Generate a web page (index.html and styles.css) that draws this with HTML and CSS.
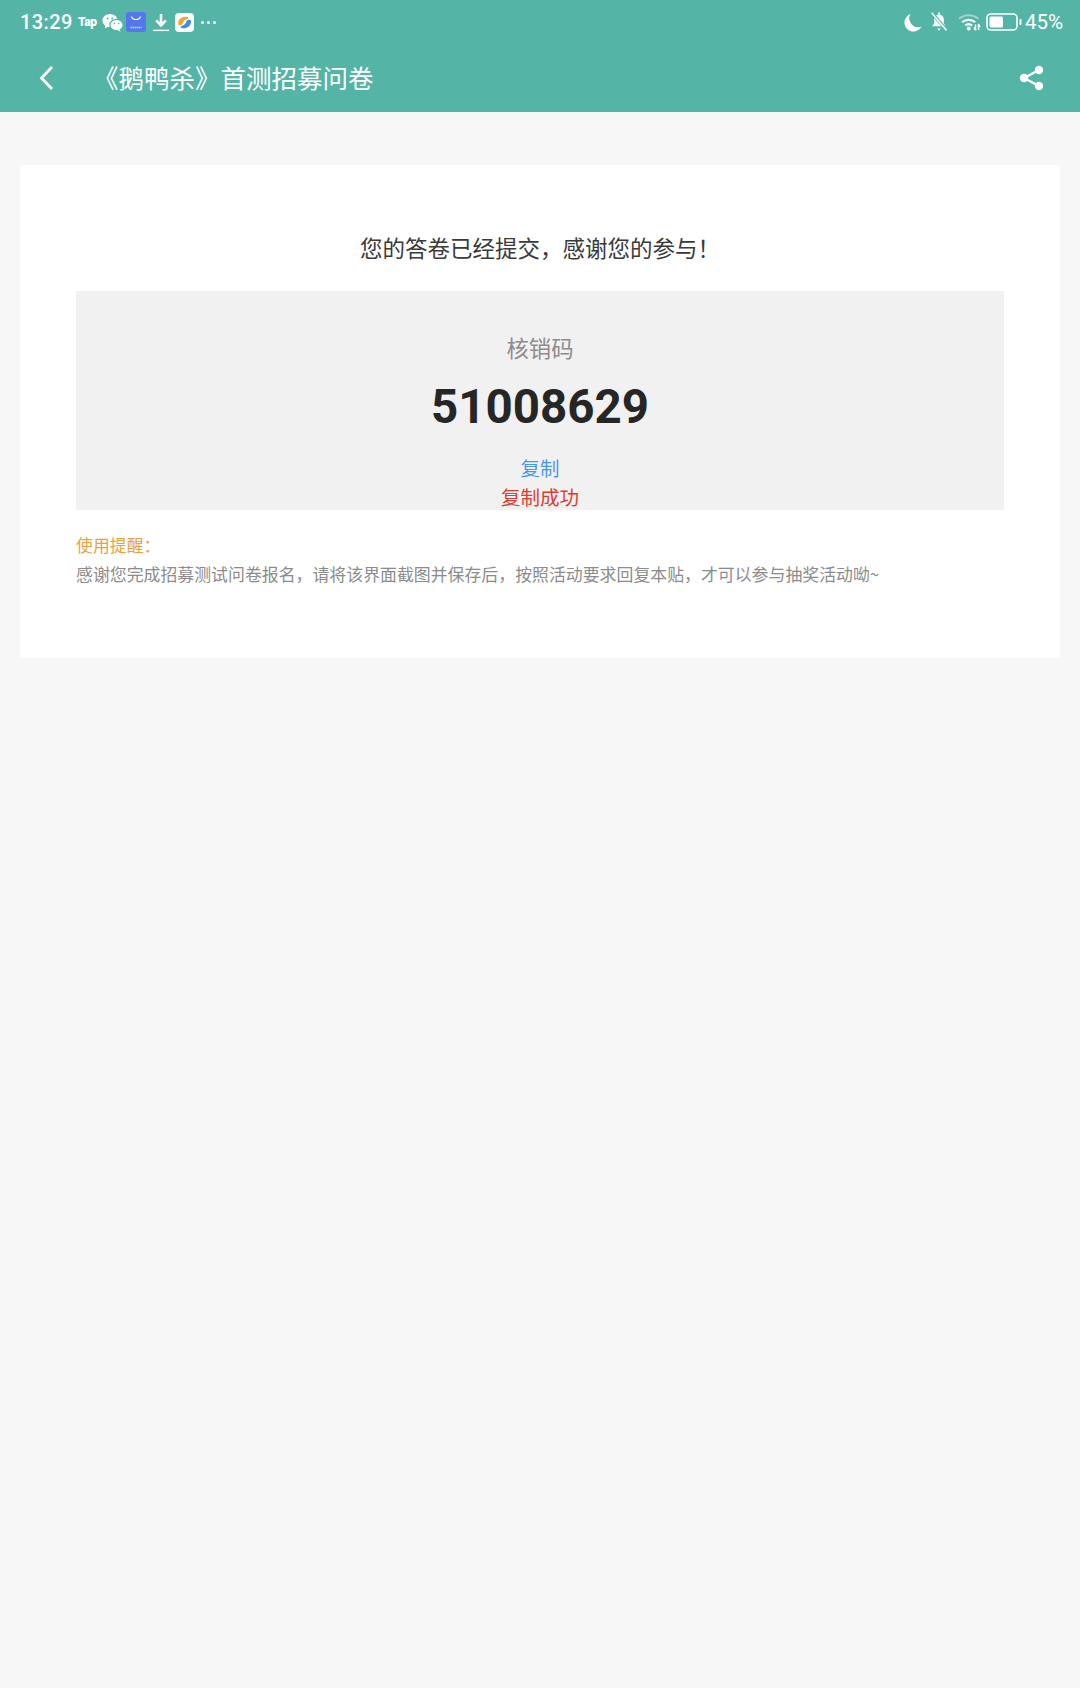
FILE: index.html
```html
<!DOCTYPE html>
<html lang="zh">
  <head>
    <meta http-equiv="Content-Type" content="text/html; charset=utf-8" />
    <meta name="viewport" content="width=device-width, initial-scale=1" />
    <title>《鹅鸭杀》首测招募问卷</title>
    <link rel="stylesheet" href="styles.css">
  </head>
  <body>
    <div class="header">
      <div class="status-bar">
        <div class="status-left">
          <span class="time">13:29</span>
          <span class="tap">Tap</span>
          <svg class="icon-wechat" width="21" height="19" viewBox="0 0 21 19">
            <ellipse cx="8" cy="7.5" rx="7.6" ry="6.6" fill="#fff"/>
            <path d="M3.5 12l-.5 3.4 3.5-2z" fill="#fff"/>
            <ellipse cx="14.5" cy="12" rx="6.6" ry="5.6" fill="#fff" stroke="#54b4a5" stroke-width="1.2"/>
            <path d="M17.5 16.5l1.2 2.2-3.4-1.6z" fill="#fff"/>
            <circle cx="5.6" cy="5.6" r="1" fill="#54b4a5"/>
            <circle cx="10.2" cy="5.6" r="1" fill="#54b4a5"/>
            <circle cx="12.4" cy="10.6" r=".8" fill="#54b4a5"/>
            <circle cx="16.6" cy="10.6" r=".8" fill="#54b4a5"/>
          </svg>
          <svg class="icon-store" width="20" height="20" viewBox="0 0 20 20">
            <rect width="20" height="20" rx="3" fill="#5477ee"/>
            <path d="M5.5 4.500c1 4 8 4 9 0" fill="none" stroke="#fff" stroke-width="1.100"/>
            <path d="M4.500 15.500h11" stroke="#cfd9fb" stroke-width="1.400" stroke-dasharray="1.400 .6"/>
          </svg>
          <svg class="icon-download" width="18" height="19" viewBox="0 0 18 19">
            <path d="M9 1v9M4.200 7.400L9 12.400l4.800-5" fill="none" stroke="#fff" stroke-width="2.600"/>
            <path d="M1 17.400h16" stroke="#fff" stroke-width="1.400"/>
          </svg>
          <svg class="icon-app" width="19" height="19" viewBox="0 0 19 19">
            <rect width="19" height="19" rx="4" fill="#fff"/>
            <path d="M3.200 11C2.800 6 7.500 2.800 12.500 4c1 .3 1 1.500 0 2-2 .8-3.500 1.200-4.300 3-.6 1.400-.8 3-2.400 3.300-1.300.2-2.400-.3-2.600-1.300z" fill="#f2a43a"/>
            <path d="M16 8c.4 5-4.500 8.300-9.500 7-1-.3-1-1.500 0-2 2-.8 3.500-1.200 4.300-3 .6-1.400.8-3 2.400-3.300 1.300-.2 2.600.3 2.800 1.300z" fill="#3f8fe0"/>
          </svg>
          <span class="dots"><i></i><i></i><i></i></span>
        </div>
        <div class="status-right">
          <svg class="icon-moon" width="18" height="19" viewBox="0 0 18 19">
            <path d="M6.500 1A8.800 8.800 0 0 0 17.500 13.500 9 9 0 1 1 6.500 1z" fill="#fff"/>
          </svg>
          <svg class="icon-bell" width="18" height="20" viewBox="0 0 18 20">
            <path d="M9 2.400c3 0 4.800 2.300 4.800 5.100v4.100l2 2.600H2.200l2-2.600V7.500C4.200 4.700 6 2.400 9 2.400z" fill="#fff"/>
            <path d="M7.200 16.600h3.600L9 18.800z" fill="#fff"/>
            <path d="M9 .6v2" stroke="#fff" stroke-width="1.600"/>
            <path d="M2 1l14.500 17" stroke="#54b4a5" stroke-width="3.400"/>
            <path d="M1.600 .8l15 17.800" stroke="#fff" stroke-width="1.500"/>
          </svg>
          <svg class="icon-wifi" width="23" height="18" viewBox="0 0 23 18">
            <path d="M1 5.800a15 15 0 0 1 19.500 0" fill="none" stroke="#9fd6cd" stroke-width="2"/>
            <path d="M4.200 9.200a10 10 0 0 1 13 0" fill="none" stroke="#fff" stroke-width="2.200"/>
            <path d="M7.300 12.400a5.400 5.400 0 0 1 6.800 0" fill="none" stroke="#fff" stroke-width="2.200"/>
            <circle cx="10.700" cy="15.600" r="2" fill="#fff"/>
            <path d="M17.500 11.500v6M20.500 11v6M16 14.500l1.500 2.500M22 14l-1.500-3" fill="none" stroke="#fff" stroke-width="1.500"/>
          </svg>
          <svg class="icon-battery" width="36" height="18" viewBox="0 0 36 18">
            <rect x="1" y="1" width="30" height="16" rx="4" fill="none" stroke="#fff" stroke-width="1.600"/>
            <rect x="3.500" y="3.500" width="13.500" height="11" rx="1.500" fill="#fff"/>
            <rect x="33.500" y="6" width="2" height="6" rx="1" fill="#fff"/>
          </svg>
          <span class="percent">45%</span>
        </div>
      </div>
      <div class="app-bar">
        <svg class="icon-back" width="15" height="26" viewBox="0 0 15 26">
          <path d="M13 2L2.500 13 13 24" fill="none" stroke="#fff" stroke-width="2.800"/>
        </svg>
        <div class="title">《鹅鸭杀》首测招募问卷</div>
        <svg class="icon-share" width="25" height="26" viewBox="0 0 25 26">
          <path d="M20 5L5 13l15 8" fill="none" stroke="#fff" stroke-width="2.400"/>
          <circle cx="20" cy="5" r="4.200" fill="#fff"/>
          <circle cx="5" cy="13" r="4.200" fill="#fff"/>
          <circle cx="20" cy="21" r="4.200" fill="#fff"/>
        </svg>
      </div>
    </div>

    <div class="card">
      <div class="message">您的答卷已经提交，感谢您的参与！</div>
      <div class="code-box">
        <div class="code-label">核销码</div>
        <div class="code">51008629</div>
        <div class="copy">复制</div>
        <div class="copied">复制成功</div>
      </div>
      <div class="note-title">使用提醒：</div>
      <div class="note">感谢您完成招募测试问卷报名，请将该界面截图并保存后，按照活动要求回复本贴，才可以参与抽奖活动呦~</div>
    </div>
  </body>
</html>
```

FILE: styles.css
```css
html,
body {
  margin: 0;
  min-height: 1688px;
}
body {
  background: #f7f7f7;
  font-family: "Noto Sans CJK SC", "Roboto", sans-serif;
}
.header {
  background: #54b4a5;
  color: #fff;
  height: 112px;
}
.status-bar {
  align-items: center;
  display: flex;
  height: 44px;
  justify-content: space-between;
  padding: 0 17px 0 20px;
}
.status-left,
.status-right {
  align-items: center;
  display: flex;
}
.time {
  font-family: "Roboto", sans-serif;
  font-size: 20px;
  font-weight: 500;
  letter-spacing: 0.4px;
  width: 58px;
}
.tap {
  font-family: "Roboto", sans-serif;
  font-size: 12px;
  font-weight: 900;
  letter-spacing: -0.3px;
  width: 24px;
}
.icon-store {
  margin-left: 3px;
}
.icon-download {
  margin-left: 6px;
}
.icon-app {
  margin-left: 5px;
}
.dots {
  display: flex;
  gap: 3px;
  margin-left: 7px;
}
.dots i {
  background: #fff;
  border-radius: 50%;
  display: block;
  height: 3px;
  width: 3px;
}
.icon-bell {
  margin-left: 8px;
}
.icon-wifi {
  margin-left: 10px;
}
.icon-battery {
  margin-left: 5px;
}
.percent {
  font-family: "Roboto", sans-serif;
  font-size: 20.5px;
  margin-left: 3px;
}
.app-bar {
  align-items: center;
  display: flex;
  height: 68px;
  padding: 0 36px 0 39px;
}
.title {
  flex: 1;
  font-size: 25.5px;
  font-weight: 400;
  line-height: 30px;
  margin: -2px 0 0 39px;
}
.card {
  background: #fff;
  margin: 53px 20px 0;
  padding: 66px 56px 70px;
}
.message {
  color: #3a3a3a;
  font-size: 22.5px;
  line-height: 32px;
  margin-bottom: 28px;
  text-align: center;
}
.code-box {
  background: #f1f1f1;
  box-sizing: border-box;
  height: 219px;
  padding-top: 40px;
  text-align: center;
}
.code-label {
  color: #8c8c8c;
  font-size: 22.4px;
  line-height: 32px;
}
.code {
  color: #262626;
  font-family: "Roboto", sans-serif;
  font-size: 47.5px;
  font-weight: 700;
  line-height: 64px;
  margin: 12px 0 15px;
}
.copy,
.copied {
  font-size: 19.5px;
  line-height: 28.5px;
}
.copy {
  color: #4b98e6;
}
.copied {
  color: #dd3c32;
}
.note-title {
  color: #e8a33d;
  font-size: 16.9px;
  line-height: 29px;
  margin-top: 20px;
}
.note {
  color: #8c8c8c;
  font-size: 16.9px;
  line-height: 29px;
}
```
